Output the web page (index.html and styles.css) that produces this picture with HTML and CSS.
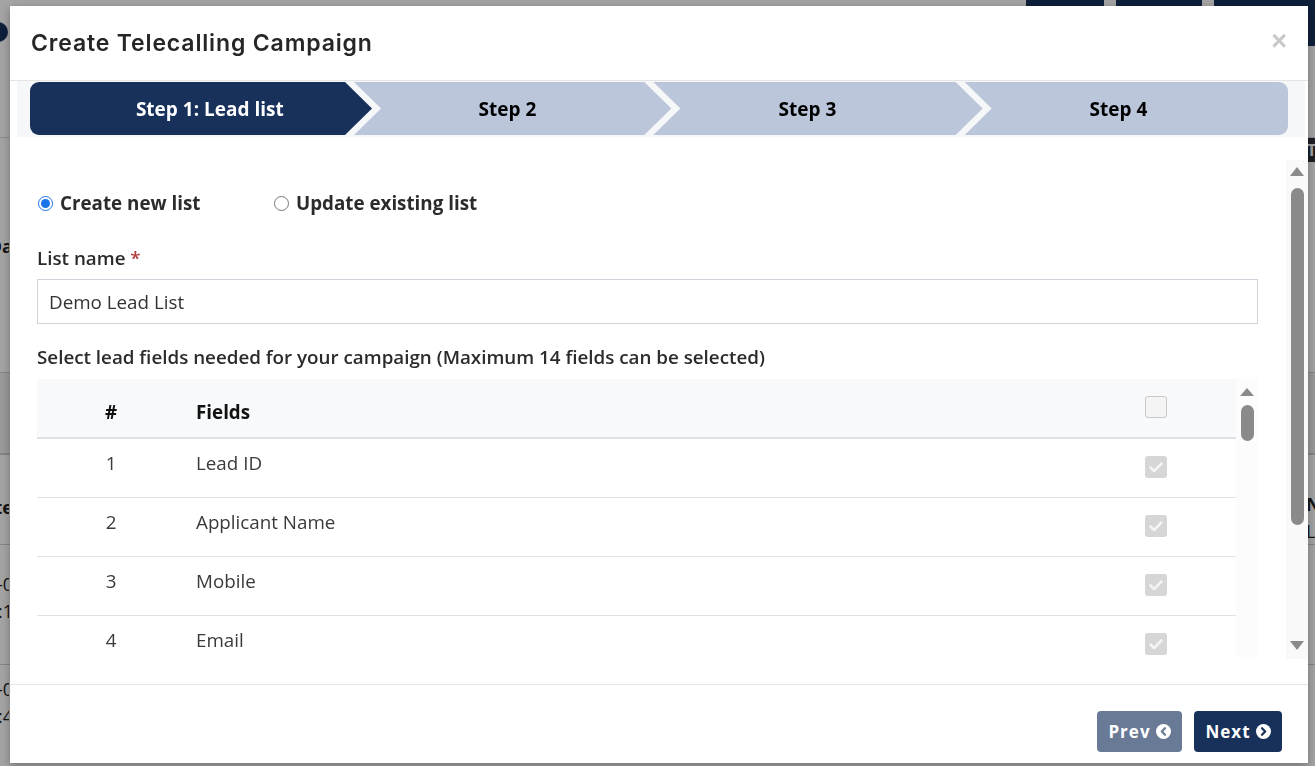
FILE: index.html
```html
<!DOCTYPE html>
<html>
<head>
<meta charset="utf-8">
<link rel="stylesheet" href="styles.css">
</head>
<body>
<div class="page">
  <div class="page-nav">
    <span class="logo-dot"></span>
    <div class="nav-right">
      <span class="nav-btn nb1"></span>
      <span class="nav-btn nb2"></span>
      <span class="nav-btn nb3"></span>
    </div>
  </div>
  <div class="prow r-top"><span class="pl"></span><span class="pr"></span></div>
  <div class="prow r-bar"><span class="pl"></span><span class="bar-t">T</span></div>
  <div class="prow r-a"><span class="pl pb"><span>Da</span></span><span class="pr"></span></div>
  <div class="prow r-gap"><span class="pl"></span><span class="pr"></span></div>
  <div class="prow band"><span class="pl"></span><span class="pr"></span></div>
  <div class="prow r-e"><span class="pl pb"><span>Date</span></span><span class="pr pr-e"><b>Ne</b><br>Li</span></div>
  <div class="prow r-d1"><span class="pl"><span>2023-0<br>10:1</span></span><span class="pr"></span></div>
  <div class="prow r-d2"><span class="pl"><span>2023-0<br>10:4</span></span><span class="pr"></span></div>
</div>
<div class="backdrop"></div>

<div class="modal">
  <div class="modal-header">
    <h4 class="modal-title">Create Telecalling Campaign</h4>
    <span class="close">&times;</span>
  </div>

  <div class="steps">
    <div class="step step-first"><span>Step 1: Lead list</span></div>
    <div class="step step-mid step-2"><span>Step 2</span></div>
    <div class="step step-mid step-3"><span>Step 3</span></div>
    <div class="step step-last"><span>Step 4</span></div>
  </div>

  <div class="body-wrap">
    <div class="modal-body">
      <div class="radio-row">
        <label class="radio"><input type="radio" name="mode" checked> <span>Create new list</span></label>
        <label class="radio"><input type="radio" name="mode"> <span>Update existing list</span></label>
      </div>

      <div class="field-label">List name <span class="req">*</span></div>
      <input class="text-input" type="text" value="Demo Lead List">

      <div class="hint">Select lead fields needed for your campaign (Maximum 14 fields can be selected)</div>

      <div class="tbl-wrap">
        <div class="tbl-scroll">
          <table class="fields">
            <thead>
              <tr>
                <th class="c-num">#</th>
                <th class="c-name">Fields</th>
                <th class="c-chk"><span class="cb cb-empty"></span></th>
              </tr>
            </thead>
            <tbody>
              <tr><td class="c-num">1</td><td class="c-name">Lead ID</td><td class="c-chk"><span class="cb cb-dis"><svg viewBox="0 0 22 22" width="22" height="22"><path d="M5.5 11.5l3.6 3.6 7.4-7.6" fill="none" stroke="#f4f4f4" stroke-width="2.6" stroke-linecap="round" stroke-linejoin="round"/></svg></span></td></tr>
              <tr><td class="c-num">2</td><td class="c-name">Applicant Name</td><td class="c-chk"><span class="cb cb-dis"><svg viewBox="0 0 22 22" width="22" height="22"><path d="M5.5 11.5l3.6 3.6 7.4-7.6" fill="none" stroke="#f4f4f4" stroke-width="2.6" stroke-linecap="round" stroke-linejoin="round"/></svg></span></td></tr>
              <tr><td class="c-num">3</td><td class="c-name">Mobile</td><td class="c-chk"><span class="cb cb-dis"><svg viewBox="0 0 22 22" width="22" height="22"><path d="M5.5 11.5l3.6 3.6 7.4-7.6" fill="none" stroke="#f4f4f4" stroke-width="2.6" stroke-linecap="round" stroke-linejoin="round"/></svg></span></td></tr>
              <tr><td class="c-num">4</td><td class="c-name">Email</td><td class="c-chk"><span class="cb cb-dis"><svg viewBox="0 0 22 22" width="22" height="22"><path d="M5.5 11.5l3.6 3.6 7.4-7.6" fill="none" stroke="#f4f4f4" stroke-width="2.6" stroke-linecap="round" stroke-linejoin="round"/></svg></span></td></tr>
              <tr><td class="c-num">5</td><td class="c-name">City</td><td class="c-chk"><span class="cb cb-dis"></span></td></tr>
            </tbody>
          </table>
        </div>
        <div class="tbl-vscroll">
          <svg class="arr" viewBox="0 0 14 8" width="14" height="8"><path d="M7 0L14 8H0Z" fill="#8a8a8a"/></svg>
          <span class="thumb thumb-sm"></span>
        </div>
      </div>
    </div>

    <div class="vscroll">
      <svg class="arr" viewBox="0 0 14 9" width="14" height="9"><path d="M7 0L14 9H0Z" fill="#8a8a8a"/></svg>
      <span class="thumb thumb-lg"></span>
      <svg class="arr arr-down" viewBox="0 0 14 9" width="14" height="9"><path d="M0 0H14L7 9Z" fill="#8a8a8a"/></svg>
    </div>
  </div>

  <div class="modal-footer">
    <button class="btn btn-prev">Prev <svg viewBox="0 0 16 16" width="15" height="15"><circle cx="8" cy="8" r="8" fill="#fff"/><path d="M9.6 4.6L6.2 8l3.4 3.4" fill="none" stroke="#687a96" stroke-width="2.4" stroke-linecap="round" stroke-linejoin="round"/></svg></button>
    <button class="btn btn-next">Next <svg viewBox="0 0 16 16" width="15" height="15"><circle cx="8" cy="8" r="8" fill="#fff"/><path d="M6.4 4.6L9.8 8l-3.4 3.4" fill="none" stroke="#17315b" stroke-width="2.4" stroke-linecap="round" stroke-linejoin="round"/></svg></button>
  </div>
</div>
</body>
</html>
```

FILE: styles.css
```css
* {
  box-sizing: border-box;
  margin: 0;
  padding: 0;
}

html, body {
  width: 1315px;
  height: 766px;
  overflow: hidden;
}

body {
  font-family: "Open Sans", "Liberation Sans", sans-serif;
  color: #333;
  background: #fff;
}

/* ---------- page behind the modal ---------- */
.page {
  height: 766px;
  background: #fff;
}

.page-nav {
  height: 46px;
  display: flex;
  align-items: flex-start;
  justify-content: space-between;
}

.logo-dot {
  width: 20px;
  height: 20px;
  border-radius: 50%;
  background: #17315b;
  margin: 22px 0 0 -12px;
}

.nav-right {
  display: flex;
  gap: 12px;
}

.nav-btn {
  display: block;
  background: #17315b;
  height: 36px;
}

.nb1 { width: 78px; }
.nb2 { width: 86px; }
.nb3 { width: 101px; height: 46px; }

.prow {
  display: flex;
  justify-content: space-between;
  align-items: center;
}

.r-top { height: 92px; border-bottom: 1px solid #ddd; }
.r-bar { height: 24px; }
.r-a { height: 168px; }
.r-gap { height: 43px; border-bottom: 1px solid #cfcfcf; }
.band { height: 82px; background: #efefef; border-bottom: 2px solid #cfcfcf; }
.r-e { height: 90px; border-bottom: 1px solid #cfcfcf; align-items: flex-start; }
.r-e .pl { margin-top: 39px; }
.r-e .pr-e { margin-top: 36px; }
.r-d1 { height: 120px; border-bottom: 1px solid #cfcfcf; align-items: flex-start; padding-top: 26px; }
.r-d2 { height: 101px; align-items: flex-start; padding-top: 11px; }

.bar-t {
  width: 8px;
  height: 24px;
  background: #2b2f3a;
  color: #fff;
  font-weight: 700;
  font-size: 16px;
  line-height: 24px;
  overflow: hidden;
}

.pl, .pr {
  width: 9px;
  overflow: hidden;
  white-space: nowrap;
  font-size: 18px;
  line-height: 27px;
  color: #222;
}

.pl {
  display: flex;
  justify-content: flex-end;
}

.pl > span {
  flex: none;
  margin-right: -4px;
  text-align: right;
}

.pb {
  font-weight: 700;
}

.backdrop {
  position: fixed;
  inset: 0;
  background: rgba(0, 0, 0, 0.36);
}

/* ---------- modal ---------- */
.modal {
  position: fixed;
  left: 10px;
  top: 6px;
  width: 1298px;
  height: 757px;
  background: #fff;
  display: flex;
  flex-direction: column;
  box-shadow: 0 3px 9px rgba(0, 0, 0, 0.3);
}

.modal-header {
  height: 75px;
  border-bottom: 1px solid #e5e5e5;
  display: flex;
  align-items: center;
  justify-content: space-between;
  padding: 0 21px 0 21px;
  flex: none;
}

.modal-title {
  font-family: "Inter", "Open Sans", sans-serif;
  font-weight: 600;
  font-size: 23px;
  letter-spacing: 0.85px;
  color: #262626;
}

.close {
  font-family: "Liberation Sans", sans-serif;
  font-weight: 700;
  font-size: 27px;
  line-height: 1;
  color: #c9c9c9;
  margin-top: -4px;
}

/* ---------- steps ---------- */
.steps {
  flex: none;
  height: 56px;
  margin: 0 3px 0 7px;
  padding: 1px 17px 2px 13px;
  background: #f6f7f9;
  display: flex;
}

.step {
  height: 53px;
  display: flex;
  align-items: center;
  justify-content: center;
  font-family: "Open Sans", sans-serif;
  font-weight: 700;
  font-size: 20px;
  color: #000;
  background: #bcc6da;
  flex: 1 1 0;
  margin-left: -18px;
}

.step span {
  display: inline-block;
  transform: scaleX(0.95);
  white-space: nowrap;
}

.step-first {
  flex: 0 0 342px;
  margin-left: 0;
  padding-left: 18px;
  background: #17315b;
  color: #fff;
  border-radius: 9px 0 0 9px;
  clip-path: polygon(0 0, calc(100% - 27px) 0, 100% 50%, calc(100% - 27px) 100%, 0 100%);
}

.step-mid {
  clip-path: polygon(0 0, calc(100% - 27px) 0, 100% 50%, calc(100% - 27px) 100%, 0 100%, 27px 50%);
}

.step-2 { padding-right: 10px; }
.step-3 { padding-right: 22px; }

.step-last {
  border-radius: 0 9px 9px 0;
  padding-right: 16px;
  clip-path: polygon(0 0, 100% 0, 100% 100%, 0 100%, 27px 50%);
}

/* ---------- body ---------- */
.body-wrap {
  flex: none;
  height: 547px;
  display: flex;
}

.modal-body {
  flex: 1;
  padding: 54px 28px 0 27px;
  overflow: hidden;
}

.radio-row {
  display: flex;
  height: 24px;
  align-items: center;
}

.radio {
  display: flex;
  align-items: center;
  gap: 7px;
  font-weight: 700;
  font-size: 18.8px;
  color: #2b2b2b;
}

.radio:first-child {
  width: 237px;
  padding-left: 1px;
}

.radio input {
  width: 15px;
  height: 15px;
  margin: 0;
  accent-color: #1a73e8;
}

.field-label {
  margin-top: 31px;
  font-weight: 600;
  font-size: 18.8px;
  line-height: 24px;
  color: #2b2b2b;
}

.req {
  color: #b23b3b;
}

.text-input {
  display: block;
  margin-top: 9px;
  width: 100%;
  height: 45px;
  border: 1px solid #cfd3da;
  padding: 0 11px;
  font-family: "Open Sans", sans-serif;
  font-size: 18.8px;
  color: #333;
  outline: none;
}

.hint {
  margin-top: 21px;
  font-weight: 600;
  font-size: 18.8px;
  line-height: 24px;
  color: #2b2b2b;
  white-space: nowrap;
}

.tbl-wrap {
  margin-top: 10px;
  height: 278px;
  display: flex;
}

.tbl-scroll {
  flex: 1;
  overflow: hidden;
}

.fields {
  width: 100%;
  border-collapse: collapse;
  font-size: 18.8px;
  line-height: 24px;
}

.fields th {
  background: #f8f9fa;
  font-weight: 700;
  color: #111;
  height: 58px;
  padding: 21px 11px 13px;
  border-bottom: 2px solid #dee2e6;
  vertical-align: top;
  text-align: left;
}

.fields td {
  padding: 12px 11px 22px;
  border-bottom: 1px solid #dee2e6;
  vertical-align: top;
  color: #3a3a3a;
  height: 59px;
}

.fields .c-num {
  width: 148px;
  text-align: center;
}

.fields .c-chk {
  width: 160px;
  text-align: center;
  padding-top: 17px;
  padding-bottom: 0;
}

.fields th.c-chk {
  padding-top: 17px;
}

.cb {
  display: inline-block;
  width: 22px;
  height: 22px;
  border-radius: 3px;
  vertical-align: top;
}

.cb svg {
  display: block;
}

.cb-empty {
  background: #f4f4f4;
  border: 1px solid #c8c8c8;
}

.cb-dis {
  background: #d6d6d6;
}

.tbl-vscroll {
  width: 22px;
  background: #fcfcfc;
  display: flex;
  flex-direction: column;
  align-items: center;
  padding-top: 9px;
}

.arr {
  display: block;
  flex: none;
}

.thumb {
  display: block;
  width: 13px;
  background: #8a8a8a;
  border-radius: 7px;
  flex: none;
}

.thumb-sm {
  height: 36px;
  margin-top: 9px;
}

.vscroll {
  width: 22px;
  margin: 23px 0 25px;
  background: #f9f9f9;
  display: flex;
  flex-direction: column;
  align-items: center;
  padding-top: 7px;
}

.thumb-lg {
  height: 337px;
  margin-top: 12px;
}

.arr-down {
  margin-top: 116px;
}

/* ---------- footer ---------- */
.modal-footer {
  flex: 1;
  border-top: 1px solid #e5e5e5;
  display: flex;
  justify-content: flex-end;
  align-items: flex-start;
  gap: 12px;
  padding: 26px 26px 0;
}

.btn {
  height: 41px;
  border: none;
  border-radius: 4px;
  color: #fff;
  font-family: "Open Sans", sans-serif;
  font-weight: 700;
  font-size: 17px;
  letter-spacing: 1px;
  display: flex;
  align-items: center;
  justify-content: center;
  gap: 5px;
}

.btn svg {
  display: block;
}

.btn-prev {
  width: 85px;
  background: #687a96;
}

.btn-next {
  width: 88px;
  background: #17315b;
}
```
